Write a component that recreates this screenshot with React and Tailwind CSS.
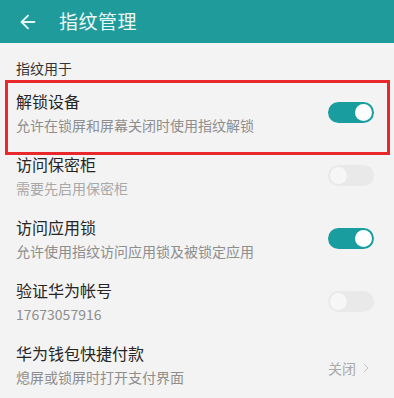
import { ArrowLeft, ChevronRight } from 'lucide-react';

const Toggle = ({ on }) => (
  <div
    className={`w-[46px] h-[21px] rounded-full flex items-center px-[2px] ${
      on ? 'bg-[#1a9d9e] justify-end' : 'bg-[#e9e9e9] justify-start'
    }`}
  >
    <div className={`w-[17px] h-[17px] rounded-full ${on ? 'bg-white' : 'bg-[#f6f6f6]'}`} />
  </div>
);

const rows = [
  { title: '解锁设备', sub: '允许在锁屏和屏幕关闭时使用指纹解锁', toggle: true },
  { title: '访问保密柜', sub: '需要先启用保密柜', toggle: false, dim: true },
  { title: '访问应用锁', sub: '允许使用指纹访问应用锁及被锁定应用', toggle: true },
  { title: '验证华为帐号', sub: '17673057916', toggle: false },
  { title: '华为钱包快捷付款', sub: '熄屏或锁屏时打开支付界面', value: '关闭' },
];

export default function App() {
  return (
    <div
      className="relative w-[394px] h-[398px] overflow-hidden bg-[#f3f3f3]"
      style={{ fontFamily: '"Noto Sans CJK SC", "Noto Sans", sans-serif' }}
    >
      {/* Header */}
      <div className="h-[43px] bg-[#1f9b9c] flex items-center pl-[17px]">
        <ArrowLeft size={22} strokeWidth={2} className="text-[#e6f5f5]" />
        <span className="ml-[20px] text-[19px] text-[#eaf7f7] tracking-[0.5px]">指纹管理</span>
      </div>

      {/* Section label */}
      <div className="h-[41px] pt-[17px] pl-[16px]">
        <div className="text-[14px] leading-[16px] text-[#333]">指纹用于</div>
      </div>

      {rows.map((row, i) => (
        <div key={i} className={`flex items-center pl-[16px] pr-[20px] ${i === 4 ? 'h-[62px]' : 'h-[63px]'} pb-[6px]`}>
          <div className="flex-1">
            <div className="text-[16px] leading-[22px] text-[#262626]">{row.title}</div>
            <div className={`mt-[3px] text-[14px] leading-[20px] ${row.dim ? 'text-[#a8a8a8]' : 'text-[#8e8e8e]'}`}>
              {row.sub}
            </div>
          </div>
          {row.value ? (
            <div className="flex items-center text-[14px] text-[#aaa] mt-[8px]">
              {row.value}
              <ChevronRight size={16} strokeWidth={1.5} className="text-[#c4c4c4] ml-[2px]" />
            </div>
          ) : (
            <Toggle on={row.toggle} />
          )}
        </div>
      ))}

      {/* Red highlight box */}
      <div className="absolute left-[5px] top-[80px] w-[385px] h-[75px] border-[3px] border-[#e8282a] pointer-events-none" />
    </div>
  );
}
